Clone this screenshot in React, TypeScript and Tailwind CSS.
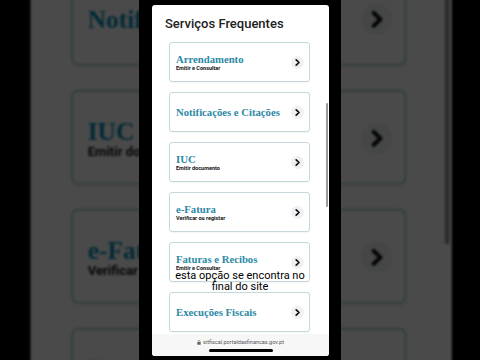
import React from "react";

const cards: { t: string; s?: string }[] = [
  { t: "Arrendamento", s: "Emitir e Consultar" },
  { t: "Notificações e Citações" },
  { t: "IUC", s: "Emitir documento" },
  { t: "e-Fatura", s: "Verificar ou registar" },
  { t: "Faturas e Recibos", s: "Emitir e Consultar" },
  { t: "Execuções Fiscais" },
];

function Chevron() {
  return (
    <div className="w-[13px] h-[13px] rounded-full bg-[#eef0f1] flex items-center justify-center shrink-0">
      <svg width="13" height="13" viewBox="0 0 13 13">
        <path d="M5.2 3.8 L8 6.5 L5.2 9.2" fill="none" stroke="#111" strokeWidth="1.7" strokeLinecap="round" strokeLinejoin="round" />
      </svg>
    </div>
  );
}

function Screen({ caption }: { caption: boolean }) {
  return (
    <div className="w-[202px] h-[360px] bg-black relative shrink-0 pt-[5px] pl-[13px]">
      <div className="w-[177px] h-[351px] bg-white rounded-[3px] relative overflow-hidden flex flex-col">
        <div className="pl-[13px] pt-[11px] text-[13px] font-medium leading-[16px] text-[#222] font-['Roboto',sans-serif]">
          Serviços Frequentes
        </div>
        <div className="mt-[10px] ml-[17px] w-[141px] flex flex-col gap-[10px]">
          {cards.map((c) => (
            <div
              key={c.t}
              className="h-[40px] border border-[#c3d9dc] rounded-[3px] flex items-center pl-[6px] pr-[5px] shadow-[0_1px_1px_rgba(0,0,0,0.04)]"
            >
              <div className="flex-1 flex flex-col">
                <div className="font-['Liberation_Serif',serif] font-bold text-[10.7px] leading-[11px] text-[#2c89a6]">
                  {c.t}
                </div>
                {c.s && (
                  <div className="font-['Roboto',sans-serif] font-bold text-[5.5px] leading-[6px] text-[#111]">
                    {c.s}
                  </div>
                )}
              </div>
              <Chevron />
            </div>
          ))}
        </div>
        <div className="absolute right-[1px] top-[98px] h-[104px] w-[2px] rounded-full bg-[#9a9a9a]" />
        <div className="absolute bottom-0 left-0 w-full h-[22px] bg-[#f7f7f7] flex flex-col items-center">
          <div className="mt-[5px] flex items-center gap-[2px] text-[5.5px] leading-[6px] text-[#555] font-['Roboto',sans-serif]">
            <svg width="4" height="5" viewBox="0 0 4 5">
              <rect x="0.3" y="2" width="3.4" height="2.8" rx="0.4" fill="#666" />
              <path d="M1 2 V1.3 A1 1 0 0 1 3 1.3 V2" fill="none" stroke="#666" strokeWidth="0.6" />
            </svg>
            <span>sitfiscal.portaldasfinancas.gov.pt</span>
          </div>
          <div className="mt-[4px] w-[64px] h-[2.5px] rounded-full bg-black" />
        </div>
      </div>
      {caption && (
        <div className="absolute left-0 top-[270px] w-full text-center text-[11px] leading-[11px] text-black font-['Roboto',sans-serif]">
          esta opção se encontra no
          <br />
          final do site
        </div>
      )}
    </div>
  );
}

export default function App() {
  return (
    <div className="w-[480px] h-[360px] bg-black relative overflow-hidden flex justify-center">
      <div
        aria-hidden="true"
        className="absolute inset-0 flex justify-center scale-[2.38] origin-center brightness-[0.29] saturate-150 blur-[0.4px]"
      >
        <Screen caption={false} />
      </div>
      <div className="relative">
        <Screen caption={true} />
      </div>
    </div>
  );
}
